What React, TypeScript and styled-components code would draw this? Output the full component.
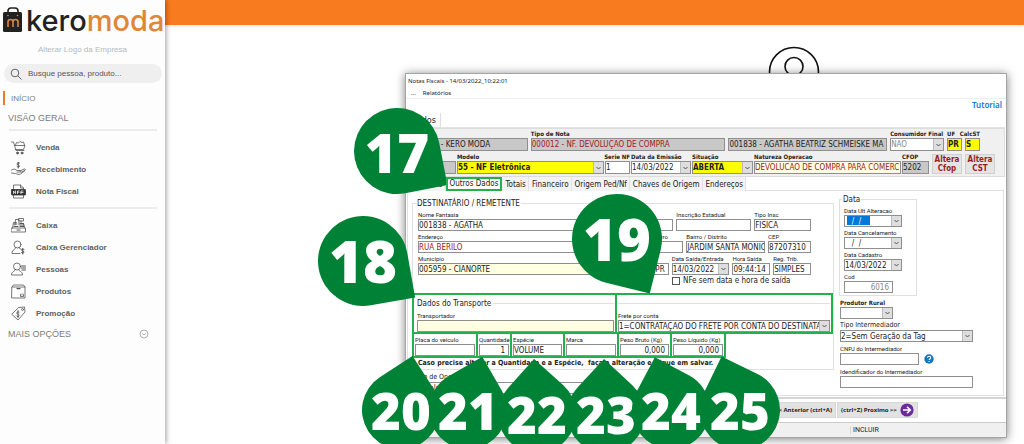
import React, { useId } from "react";
import styled, { createGlobalStyle, css } from "styled-components";

const sans = `"Liberation Sans", Arial, sans-serif`;
const form = `"DejaVu Sans Condensed", "DejaVu Sans", sans-serif`;
const caption = `"Noto Sans", sans-serif`;
const small = `Roboto, sans-serif`;
const green = "#008236";
const outline = "#22b14c";

const GlobalStyle = createGlobalStyle`
  *, *::before, *::after { box-sizing: border-box; }
  body { margin: 0; background: #fff; font-family: ${sans}; }
  button, input, select { font: inherit; color: inherit; margin: 0; border-radius: 0; }
  button { cursor: pointer; }
`;

const Page = styled.div`
  display: flex;
  min-height: 100vh;
`;

/* ---------- sidebar ---------- */

const Sidebar = styled.aside`
  position: relative;
  z-index: 1;
  flex: 0 0 165px;
  background: #fdfdfd;
  box-shadow: 1px 0 5px rgba(0, 0, 0, 0.4);
  color: #666;
`;

const Logo = styled.div`
  display: flex;
  align-items: flex-start;
  height: 40px;
  padding: 7px 0 0 3px;
  gap: 3px;
`;

const Brand = styled.span`
  font: 500 29px/28px Inter, ${sans};
  color: #222;
  span { color: #e08638; }
`;

const LogoNote = styled.a`
  display: block;
  margin: 2px 0 6px;
  text-align: center;
  font-size: 8px;
  line-height: 16px;
  color: #b8b8b8;
  text-decoration: none;
`;

const Search = styled.label`
  display: flex;
  align-items: center;
  gap: 6px;
  height: 19px;
  margin: 0 3px 0 4px;
  padding: 0 6px;
  border-radius: 10px;
  background: #efefef;
  input {
    flex: 1;
    min-width: 0;
    padding: 0;
    border: 0;
    outline: 0;
    background: none;
    font-size: 8px;
    &::placeholder { color: #555; opacity: 1; }
  }
`;

const Section = styled.a<{ $active?: boolean }>`
  display: flex;
  justify-content: space-between;
  align-items: center;
  height: ${(p) => (p.$active ? 14 : 19)}px;
  margin: ${(p) => (p.$active ? "8px 0 3px 3px" : "0 16px 2px 8px")};
  padding-left: ${(p) => (p.$active ? 6 : 0)}px;
  border-left: ${(p) => (p.$active ? "2px solid #ee7a26" : "0")};
  font-size: ${(p) => (p.$active ? 8 : 9)}px;
  color: #7c7c7c;
  text-decoration: none;
`;

const MenuGroup = styled.nav`
  margin: 0 8px 0 9px;
  padding: 5px 0;
  border-top: 2px solid #ececec;
  &:last-of-type { padding-bottom: 0; }
`;

const MenuLink = styled.a`
  display: flex;
  align-items: center;
  gap: 10px;
  height: 22px;
  padding-left: 2px;
  font-size: 8px;
  font-weight: bold;
  color: #606060;
  text-decoration: none;
`;

const Line = ({ children }: { children: React.ReactNode }) => (
  <svg width="15" height="15" viewBox="0 0 30 30" fill="none" stroke="#555" strokeWidth="1.6" strokeLinecap="round" strokeLinejoin="round" aria-hidden>
    {children}
  </svg>
);

const CartIcon = () => (
  <Line>
    <path d="M1 4h4l5 17h16M7 11h21l-3 8H9" />
    <path d="M9 10l2-5 4 1 3-3 4 2 3-1 2 6" />
    <circle cx="13" cy="26" r="2" fill="#555" /><circle cx="22" cy="26" r="2" fill="#555" />
  </Line>
);
const HandIcon = () => (
  <Line>
    <path d="M17 2c-3-1-5 0-5 2s5 2 5 4-3 3-5 1M14.500 1v11" strokeWidth="2" />
    <path d="M1 16c5-3 8-2 11 1h6c2 0 2 3 0 3h-6M18 18l8-4c2-1 4 1 2 3l-9 7c-3 2-7 0-10-1l-8-1" />
    <path d="M20 21l7-4" />
  </Line>
);
const FileIcon = () => (
  <Line>
    <path d="M5 11V2h14l6 6v3M19 2v6h6M5 22v6h20v-6" />
    <rect x="1" y="11" width="28" height="11" rx="1" fill="#333" stroke="#333" />
    <path d="M5 19v-5l4 5v-5M13 19v-5h3M13 16.500h3M20 19v-5h4M20 17h4" stroke="#fff" strokeWidth="1.500" />
  </Line>
);
const RegisterIcon = () => (
  <Line>
    <path d="M1 20h28v8H1zM3 20l2-11h6M27 20l-2-9M8 14l1-11h7v11M16 1h9v5h-9zM20 6v4" />
    <path d="M18 11h7M18 14h8M18 17h8M6 17h8M12 24h6M6 12h6" strokeWidth="2" />
  </Line>
);
const ManagerIcon = () => (
  <Line>
    <circle cx="13" cy="9" r="7" />
    <path d="M10 15c0 4-8 3-8 12h16M16 15c0 2 2 3 4 3" />
    <path d="M26 19c-2-1-5-1-5 1s5 2 5 4-3 3-5 1M23.500 17v11" strokeWidth="2" />
  </Line>
);
const PeopleIcon = () => (
  <Line>
    <circle cx="12" cy="9" r="7" />
    <path d="M9 15c0 4-8 3-8 11h22c0-8-8-7-8-11" />
    <path d="M21 8h8M21 12h8M22 16h7" strokeWidth="2.200" />
  </Line>
);
const BoxIcon = () => (
  <Line>
    <path d="M2 6l3-4h20l3 4v22H2zM2 6h26" />
    <path d="M12 9h6" strokeWidth="2.500" />
    <path d="M19 22v3h6v-3M20 20v2M24 20v2" />
  </Line>
);
const TagIcon = () => (
  <Line>
    <path d="M16 3l11-1 1 10-14 16L2 17z" />
    <circle cx="23" cy="7" r="2" />
    <path d="M16 12c-3-1-5 1-4 3s4 1 4 4-4 3-5 1M14 9v14" strokeWidth="1.800" />
  </Line>
);

const menu = [
  [
    { name: "Venda", Icon: CartIcon },
    { name: "Recebimento", Icon: HandIcon },
    { name: "Nota Fiscal", Icon: FileIcon },
  ],
  [
    { name: "Caixa", Icon: RegisterIcon },
    { name: "Caixa Gerenciador", Icon: ManagerIcon },
    { name: "Pessoas", Icon: PeopleIcon },
    { name: "Produtos", Icon: BoxIcon },
    { name: "Promoção", Icon: TagIcon },
  ],
];

/* ---------- desktop ---------- */

const Main = styled.main`
  flex: 1;
  min-width: 0;
  display: flex;
  flex-direction: column;
`;

const TopBar = styled.header`
  height: 25px;
  background: #f97b20;
  box-shadow: 0 1px 3px rgba(0, 0, 0, 0.12);
`;

const Stage = styled.div`
  position: relative;
  flex: 1;
  overflow: hidden;
`;

const UserMark = styled.svg`
  position: absolute;
  left: 603px;
  top: 21px;
`;

const Window = styled.section`
  position: absolute;
  left: 240px;
  right: 17px;
  top: 48px;
  border: 1px solid #a5a5a5;
  background: #fff;
  box-shadow: 0 1px 9px rgba(0, 0, 0, 0.5);
  font-family: ${form};
  font-size: 7px;
  color: #222;
  white-space: nowrap;
`;

const TitleBar = styled.h1`
  margin: 0;
  padding: 0 2px;
  font: 400 6px/14px ${caption};
`;

const MenuBar = styled.div`
  display: flex;
  gap: 7px;
  padding: 0 5px;
  border-bottom: 1px solid #eee;
  font: 400 6px/10px ${caption};
`;

const TutorialRow = styled.div`
  padding: 0 4px 2px;
  text-align: right;
  font: 600 8px/12px ${caption};
  a {
    color: #0b7bd6;
    text-decoration: none;
  }
`;

const PageTab = styled.div`
  width: 35px;
  padding-right: 4px;
  border-right: 1px solid #ddd;
  text-align: right;
  font-size: 9px;
  line-height: 14px;
`;

const HeaderPanel = styled.div`
  display: flex;
  flex-direction: column;
  gap: 1px;
  margin: 1px 1px 0 0;
  padding: 0 0 2px 4px;
  border: 1px solid #ddd;
  border-left: 0;
  background: #f0f0f0;
  box-shadow: 0 -1px 0 #e3e3e3;
`;

const Row = styled.div<{ $gap?: number; $end?: number }>`
  display: flex;
  align-items: flex-end;
  gap: ${(p) => p.$gap ?? 3}px;
  padding-right: ${(p) => p.$end ?? 0}px;
`;

type Tone = "plain" | "gray" | "yellow" | "cream";
const toneColor: Record<Tone, string> = {
  plain: "#fff",
  gray: "#c8c8c8",
  yellow: "#ffff00",
  cream: "#ffffe1",
};

const FieldBox = styled.div<{ $w?: number; $grow?: boolean }>`
  flex: ${(p) => (p.$grow ? 1 : 0)} 1 ${(p) => (p.$w ? `${p.$w}px` : "auto")};
  min-width: 0;
`;

const FieldLabel = styled.label<{ $kind: "bold" | "small" | "wide"; $right?: boolean }>`
  display: flex;
  justify-content: ${(p) => (p.$right ? "flex-end" : "flex-start")};
  height: 9px;
  ${(p) => p.$kind === "bold" && css`font: 700 6px/9px ${form};`}
  ${(p) => p.$kind === "small" && css`font: 400 6px/9px ${small};`}
  ${(p) => p.$kind === "wide" && css`font: 400 7px/9px ${form};`}
`;

const Control = styled.div<{ $tone: Tone; $tall?: boolean }>`
  display: flex;
  height: ${(p) => (p.$tall ? 13 : 12)}px;
  border: 1px solid #8f8f8f;
  background: ${(p) => toneColor[p.$tone]};
`;

const entry = css<{ $ink?: string; $bold?: boolean; $right?: boolean }>`
  flex: 1;
  width: 100%;
  min-width: 0;
  padding: 1px 0 0;
  border: 0;
  outline: 0;
  appearance: none;
  background: none;
  font: ${(p) => (p.$bold ? 700 : 400)} 8px/10px ${form};
  color: ${(p) => p.$ink ?? "#222"};
  text-align: ${(p) => (p.$right ? "right" : "left")};
`;

const Entry = styled.input<{ $ink?: string; $bold?: boolean; $right?: boolean; $marked?: boolean }>`
  ${entry}
  ${(p) => p.$right && css`padding-right: 3px;`}
  ${(p) => p.$marked && css`background: linear-gradient(#0078d7, #0078d7) 2px 0 / 23px 9px no-repeat;`}
`;
const Choice = styled.select<{ $ink?: string; $bold?: boolean; $right?: boolean }>`${entry}`;

const DropMark = styled.span`
  flex: 0 0 10px;
  display: flex;
  align-items: center;
  justify-content: center;
  border-left: 1px solid #bbb;
  background: #dedede;
  pointer-events: none;
`;

interface FieldProps {
  label: string;
  value?: string;
  w?: number;
  grow?: boolean;
  kind?: "bold" | "small" | "wide";
  tone?: Tone;
  ink?: string;
  bold?: boolean;
  right?: boolean;
  labelRight?: boolean;
  tall?: boolean;
  drop?: "select" | "date";
  marked?: boolean;
}

function Field({ label, value = "", w, grow, kind = "small", tone = "plain", ink, bold, right, labelRight, tall, drop, marked }: FieldProps) {
  const id = useId();
  return (
    <FieldBox $w={w} $grow={grow}>
      <FieldLabel htmlFor={id} $kind={kind} $right={labelRight}>{label}</FieldLabel>
      <Control $tone={tone} $tall={tall}>
        {drop === "select" ? (
          <Choice id={id} $ink={ink} $bold={bold}><option>{value}</option></Choice>
        ) : (
          <Entry id={id} defaultValue={value} $ink={ink} $bold={bold} $right={right} $marked={marked} />
        )}
        {drop && (
          <DropMark>
            <svg width="5" height="4" viewBox="0 0 5 4" fill="none" stroke="#555" aria-hidden><path d="M.5 1l2 2 2-2" /></svg>
          </DropMark>
        )}
      </Control>
    </FieldBox>
  );
}

const AlterButton = styled.button`
  flex: 0 0 30px;
  height: 20px;
  margin-left: 2px;
  padding: 0;
  border: 1px solid #d0d0d0;
  background: #e4e4e4;
  font: 700 8px/9px ${form};
  color: #9b1c1c;
`;

const Tabs = styled.div`
  display: flex;
  margin-bottom: -1px;
  font-size: 8px;
  line-height: 13px;
`;

const Tab = styled.button<{ $on?: boolean }>`
  position: relative;
  height: 14px;
  padding: 0 2px 0 3px;
  border: 0;
  border-right: 1px solid #e2e2e2;
  background: #f3f3f3;
  &:first-child { padding-left: 5px; }
  ${(p) => p.$on && css`
    z-index: 1;
    padding: 0 2px;
    border: 2px solid ${outline};
    background: #fff;
    line-height: 10px;
  `}
`;

const Content = styled.div`
  display: flex;
  gap: 5px;
  margin: 0 2px 0 1px;
  padding: 0 0 1px 4px;
  border: 1px solid #e0e0e0;
`;

const LeftColumn = styled.div`
  flex: 1 1 422px;
  min-width: 0;
  padding-top: 7px;
`;

const RightColumn = styled.div`
  flex: 0 0 164px;
  display: flex;
  flex-direction: column;
  gap: 2px;
  padding: 3px 30px 0 1px;
`;

const Group = styled.fieldset<{ $open?: boolean }>`
  display: grid;
  gap: 1px;
  min-width: 0;
  margin: 0;
  padding: 1px 22px 7px 5px;
  border: 1px solid #e0e0e0;
  ${(p) => p.$open && css`border-bottom: 0;`}
  legend {
    margin-left: -2px;
    padding: 0 1px;
    font-size: 8px;
    line-height: 11px;
  }
`;

const DateGroup = styled(Group)`
  width: 78px;
  margin-left: -1px;
  padding: 1px 14px 2px 4px;
`;

const CheckLine = styled.label`
  justify-self: end;
  display: flex;
  align-items: center;
  gap: 3px;
  width: 139px;
  font-size: 8px;
  line-height: 10px;
  input {
    appearance: none;
    width: 8px;
    height: 8px;
    border: 1px solid #555;
    background: #fff;
  }
`;

const Transport = styled.div`
  border: 1px solid #e0e0e0;
  border-top: 0;
  border-left: 0;
`;

const Outlined = styled.div<{ $w: number; $grow?: boolean; $main?: boolean }>`
  flex: ${(p) => (p.$grow ? 1 : 0)} 1 ${(p) => p.$w}px;
  min-width: 0;
  border: 2px solid ${outline};
  padding: ${(p) => (p.$main ? "3px 1px 0 3px" : "1px 1px 0")};
  & + & { margin-left: -2px; padding-left: 1px; }
`;

const OutlinedRow = styled.div`
  display: flex;
  & + & { margin-top: -2px; }
`;

const Heading = styled.div`
  display: flex;
  align-items: center;
  gap: 2px;
  height: 13px;
  padding-bottom: 2px;
  font-size: 8px;
  &::after {
    content: "";
    flex: 1;
    border-top: 1px solid #e0e0e0;
  }
`;

const Notice = styled.p`
  margin: 0;
  padding-left: 6px;
  font: 700 7px/11px ${form};
  white-space: pre;
`;

const Operation = styled.div`
  width: 197px;
  padding: 3px 0 0 2px;
`;

const HelpRow = styled.div`
  display: flex;
  align-items: flex-end;
  gap: 5px;
`;

const RoundButton = styled.button`
  display: flex;
  padding: 0 0 1px;
  border: 0;
  background: none;
`;

const Footer = styled.div`
  display: flex;
  gap: 1px;
  margin-top: 1px;
  padding: 3px 0 4px 309px;
  border-top: 2px solid #d5d5d5;
`;

const StepButton = styled.button<{ $w: number }>`
  flex: 0 0 ${(p) => p.$w}px;
  display: flex;
  align-items: center;
  justify-content: flex-end;
  gap: 3px;
  height: 16px;
  padding: 0 3px;
  border: 1px solid #d8d8d8;
  background: #e2e2e2;
  font: 700 6px/14px ${caption};
`;

const StatusBar = styled.div`
  padding-left: 444px;
  border-top: 1px solid #ccc;
  background: #f0f0f0;
  font: 400 7px/14px ${small};
  span {
    padding-left: 2px;
    border-left: 1px solid #d5d5d5;
  }
`;

/* ---------- numbered pins ---------- */

const Pin = styled.div<{ $x: number; $y: number; $r: number; $turn: number; $size: number }>`
  position: absolute;
  left: ${(p) => p.$x - p.$r}px;
  top: ${(p) => p.$y - p.$r}px;
  width: ${(p) => p.$r * 2}px;
  height: ${(p) => p.$r * 2}px;
  display: flex;
  align-items: center;
  justify-content: center;
  font: 800 ${(p) => p.$size}px/1 "Open Sans", "Noto Sans", sans-serif;
  color: #fff;
  &::before {
    content: "";
    position: absolute;
    inset: 0;
    border-radius: 50% 50% 0 50%;
    background: ${green};
    transform: rotate(${(p) => p.$turn}deg);
  }
  span { position: relative; }
`;

const pins = [
  { n: 17, x: 232, y: 126, r: 43, turn: -11, size: 55 },
  { n: 18, x: 198, y: 236, r: 45, turn: -10, size: 58 },
  { n: 19, x: 452, y: 214, r: 45, turn: 14, size: 58 },
  { n: 20, x: 236, y: 385, r: 39, turn: -123, size: 51 },
  { n: 21, x: 303, y: 385, r: 39, turn: -120, size: 51 },
  { n: 22, x: 372, y: 389, r: 39, turn: -138, size: 51 },
  { n: 23, x: 441, y: 389, r: 39, turn: -137, size: 51 },
  { n: 24, x: 506, y: 385, r: 39, turn: -152, size: 51 },
  { n: 25, x: 575, y: 385, r: 40, turn: -154, size: 51 },
];

const red = "#a02020";

export default function App() {
  return (
    <Page>
      <GlobalStyle />
      <Sidebar>
        <Logo>
          <svg width="20" height="26" viewBox="0 0 20 26" aria-hidden>
            <path d="M5 7V4a3 3 0 0 1 3-3h4a3 3 0 0 1 3 3v3" fill="none" stroke="#222" strokeWidth="1.600" />
            <rect x="0" y="5" width="19" height="20" rx="1.500" fill="#222" />
            <path d="M5 20v-5a2.500 2.500 0 0 1 5 0v5M10 15a2.500 2.500 0 0 1 5 0v5" fill="none" stroke="#e08638" strokeWidth="1.600" />
            <circle cx="5" cy="8.500" r=".8" fill="#e08638" /><circle cx="14.500" cy="8.500" r=".8" fill="#e08638" />
          </svg>
          <Brand>kero<span>moda</span></Brand>
        </Logo>
        <LogoNote href="#logo">Alterar Logo da Empresa</LogoNote>
        <Search>
          <svg width="12" height="12" viewBox="0 0 12 12" fill="none" stroke="#555" strokeWidth=".9" aria-hidden>
            <circle cx="5" cy="5" r="3.800" /><path d="M8 8l3.500 3.500" />
          </svg>
          <input aria-label="Busca" placeholder="Busque pessoa, produto..." />
        </Search>
        <Section href="#inicio" $active>INÍCIO</Section>
        <Section href="#geral">VISÃO GERAL</Section>
        {menu.map((group, i) => (
          <MenuGroup key={i}>
            {group.map(({ name, Icon }) => (
              <MenuLink key={name} href="#menu"><Icon />{name}</MenuLink>
            ))}
          </MenuGroup>
        ))}
        <Section href="#mais">
          MAIS OPÇÕES
          <svg width="10" height="10" viewBox="0 0 10 10" fill="none" stroke="#999" strokeWidth=".8" aria-hidden>
            <circle cx="5" cy="5" r="4" /><path d="M3 4.300l2 1.700 2-1.700" />
          </svg>
        </Section>
      </Sidebar>

      <Main>
        <TopBar />
        <Stage>
          <UserMark width="52" height="52" viewBox="0 0 52 52" fill="none" stroke="#111" strokeWidth="1.600" aria-hidden>
            <circle cx="26" cy="26" r="24.500" /><circle cx="26" cy="20.500" r="9" />
          </UserMark>

          <Window>
            <TitleBar>Notas Fiscais - 14/03/2022_10:22:01</TitleBar>
            <MenuBar><span>...</span><span>Relatórios</span></MenuBar>
            <TutorialRow><a href="#tutorial">Tutorial</a></TutorialRow>
            <PageTab>Dados</PageTab>

            <HeaderPanel>
              <Row $end={24}>
                <Field tall kind="bold" label="Empresa" value="000001 - KERO MODA" w={118} grow tone="gray" />
                <Field tall kind="bold" label="Tipo de Nota" value="000012 - NF. DEVOLUÇÃO DE COMPRA" w={195} grow tone="gray" ink={red} />
                <Field tall kind="bold" label="" value="001838 - AGATHA BEATRIZ SCHMEISKE MA" w={159} grow tone="gray" />
                <Field tall kind="bold" label="Consumidor Final" value="NAO" w={54} ink="#888" drop="select" />
                <Field tall kind="bold" label="UF" value="PR" w={15} tone="yellow" bold />
                <Field tall kind="bold" label="CalcST" value="S" w={15} tone="yellow" bold labelRight />
              </Row>
              <Row $gap={1} $end={9}>
                <Field tall kind="bold" label="Nº NF" w={46} tone="gray" />
                <Field tall kind="bold" label="Modelo" value="55 - NF Eletrônica" w={147} grow tone="yellow" bold drop="select" />
                <Field tall kind="bold" label="Serie NF" value="1" w={25} labelRight />
                <Field tall kind="bold" label="Data da Emissão" value="14/03/2022" w={60} drop="date" />
                <Field tall kind="bold" label="Situação" value="ABERTA" w={61} tone="yellow" bold drop="select" />
                <Field tall kind="bold" label="Natureza Operacao" value="DEVOLUCAO DE COMPRA PARA COMERC" w={147} grow tone="cream" ink={red} />
                <Field tall kind="bold" label="CFOP" value="5202" w={27} tone="gray" />
                <AlterButton>Altera<br />Cfop</AlterButton>
                <AlterButton>Altera<br />CST</AlterButton>
              </Row>
            </HeaderPanel>

            <Tabs>
              <Tab>Produtos</Tab>
              <Tab $on>Outros Dados</Tab>
              <Tab>Totais</Tab>
              <Tab>Financeiro</Tab>
              <Tab>Origem Ped/Nf</Tab>
              <Tab>Chaves de Origem</Tab>
              <Tab>Endereços</Tab>
            </Tabs>

            <Content>
              <LeftColumn>
                <Group $open>
                  <legend>DESTINATÁRIO / REMETENTE</legend>
                  <Row>
                    <Field label="Nome Fantasia" value="001838 - AGATHA" w={256} grow />
                    <Field label="Inscrição Estadual" w={75} />
                    <Field label="Tipo Insc" value="FÍSICA" w={57} />
                  </Row>
                  <Row>
                    <Field label="Endereço" value="RUA BERILO" w={226} grow ink={red} />
                    <Field label="Numero" w={37} />
                    <Field label="Bairro / Distrito" value="JARDIM SANTA MÔNICA" w={79} />
                    <Field label="CEP" value="87207310" w={43} />
                  </Row>
                  <Row>
                    <Field label="Município" value="005959 - CIANORTE" w={230} grow tone="cream" />
                    <Field label="UF" value="PR" w={19} right />
                    <Field label="Data Saída/Entrada" value="14/03/2022" w={58} drop="date" />
                    <Field label="Hora Saída" value="09:44:14" w={38} />
                    <Field label="Reg. Trib." value="SIMPLES" w={38} />
                  </Row>
                  <CheckLine><input type="checkbox" />NFe sem data e hora de saída</CheckLine>
                </Group>

                <Transport>
                  <OutlinedRow>
                    <Outlined $w={205} $main>
                      <Heading>Dados do Transporte</Heading>
                      <Field label="Transportador" tone="cream" />
                    </Outlined>
                    <Outlined $w={218} $grow $main>
                      <Heading />
                      <Field label="Frete por conta" value="1=CONTRATAÇÃO DO FRETE POR CONTA DO DESTINATÁRI" drop="select" />
                    </Outlined>
                  </OutlinedRow>
                  <OutlinedRow>
                    <Outlined $w={66}><Field label="Placa do veículo" /></Outlined>
                    <Outlined $w={36}><Field label="Quantidade" value="1" right /></Outlined>
                    <Outlined $w={55}><Field label="Espécie" value="VOLUME" /></Outlined>
                    <Outlined $w={56}><Field label="Marca" /></Outlined>
                    <Outlined $w={55}><Field label="Peso Bruto (Kg)" value="0,000" right /></Outlined>
                    <Outlined $w={56}><Field label="Peso Líquido (Kg)" value="0,000" right /></Outlined>
                  </OutlinedRow>
                  <Notice>{"Caso precise alterar a Quantidade e a Espécie,  faça a alteração e clique em salvar."}</Notice>
                </Transport>
                <Operation>
                  <Field kind="wide" label="Tipo de Operacao" value="Devolucion" drop="select" />
                </Operation>
              </LeftColumn>

              <RightColumn>
                <DateGroup>
                  <legend>Data</legend>
                  <Field label="Data Ult Alteracao" value="   /  /" ink="#fff" marked drop="date" />
                  <Field label="Data Cancelamento" value="   /  /" drop="date" />
                  <Field label="Data Cadastro" value="14/03/2022" drop="date" />
                  <Row $end={9}><Field label="Cod" value="6016" w={48} grow ink="#888" right /></Row>
                </DateGroup>
                <Row><Field kind="bold" label="Produtor Rural" w={53} drop="select" /></Row>
                <Row><Field kind="wide" label="Tipo Intermediador" value="2=Sem Geração da Tag" w={133} grow drop="select" /></Row>
                <HelpRow>
                  <Field label="CNPJ do Intermediador" w={79} />
                  <RoundButton aria-label="Ajuda">
                    <svg width="10" height="10" viewBox="0 0 10 10" aria-hidden>
                      <circle cx="5" cy="5" r="4.700" fill="#1478b8" />
                      <path d="M3.500 3.800c0-2 3.200-2 3.200 0 0 1.200-1.600 1.100-1.600 2.200M5.100 7v1" fill="none" stroke="#fff" strokeWidth="1.100" />
                    </svg>
                  </RoundButton>
                </HelpRow>
                <Row><Field label="Idendificador do Intermediador" w={133} grow /></Row>
              </RightColumn>
            </Content>

            <Footer>
              <StepButton $w={121}>&lt;&lt; Anterior (ctrl+A)</StepButton>
              <StepButton $w={81}>
                (ctrl+Z) Proximo &gt;&gt;
                <svg width="14" height="14" viewBox="0 0 14 14" aria-hidden>
                  <circle cx="7" cy="7" r="6.600" fill="#6b2a9c" />
                  <path d="M3 7h7M7 3.800L10.300 7 7 10.200" fill="none" stroke="#fff" strokeWidth="1.600" />
                </svg>
              </StepButton>
            </Footer>
            <StatusBar><span>INCLUIR</span></StatusBar>
          </Window>

          {pins.map((p) => (
            <Pin key={p.n} $x={p.x} $y={p.y} $r={p.r} $turn={p.turn} $size={p.size}><span>{p.n}</span></Pin>
          ))}
        </Stage>
      </Main>
    </Page>
  );
}
